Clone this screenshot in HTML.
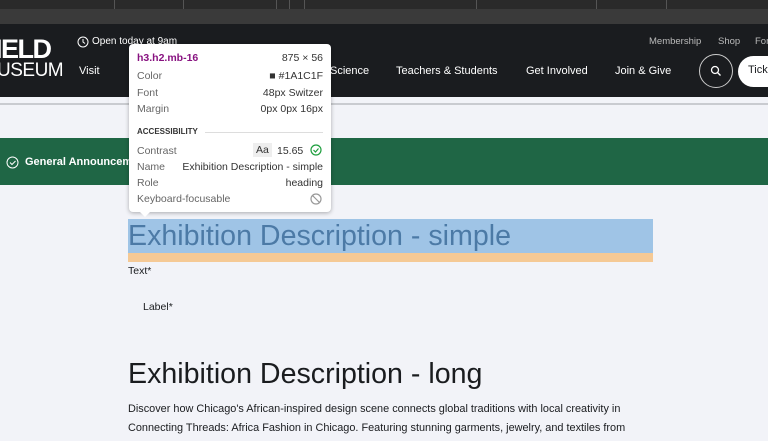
<!DOCTYPE html>
<html><head><style>
*{margin:0;padding:0;box-sizing:border-box}
body{width:768px;height:441px;overflow:hidden;background:#f2f3f8;font-family:"Liberation Sans",sans-serif;position:relative}
.a{position:absolute;white-space:nowrap}
</style></head><body>
<div class="a" style="left:0;top:0;width:768px;height:9px;background:#2a2a2a"></div>
<div class="a" style="left:114px;top:0;width:1px;height:9px;background:#555"></div>
<div class="a" style="left:183px;top:0;width:1px;height:9px;background:#555"></div>
<div class="a" style="left:276px;top:0;width:1px;height:9px;background:#555"></div>
<div class="a" style="left:289px;top:0;width:1px;height:9px;background:#555"></div>
<div class="a" style="left:304px;top:0;width:1px;height:9px;background:#555"></div>
<div class="a" style="left:476px;top:0;width:1px;height:9px;background:#555"></div>
<div class="a" style="left:596px;top:0;width:1px;height:9px;background:#555"></div>
<div class="a" style="left:666px;top:0;width:1px;height:9px;background:#555"></div>
<div class="a" style="left:0;top:9px;width:768px;height:15px;background:#3a3a3a"></div>
<div class="a" style="left:0;top:24px;width:768px;height:73px;background:#1a1c1f"></div>
<div class="a" style="left:-5px;top:34px;color:#fff;font-weight:bold;font-size:27px;letter-spacing:-1.5px">IELD</div>
<div class="a" style="left:-3px;top:60px;color:#fff;font-size:19px;letter-spacing:-0.5px">USEUM</div>
<svg class="a" style="left:77px;top:36px" width="12" height="12"><circle cx="6" cy="6" r="5" fill="none" stroke="#fff" stroke-width="1"/><path d="M6 3v3l2 1.5" fill="none" stroke="#fff"/></svg>
<div class="a" style="left:92px;top:36px;color:#fff;font-size:10px">Open today at 9am</div>
<div class="a" style="left:79px;top:65px;color:#fff;font-size:11px">Visit</div>
<div class="a" style="left:330px;top:65px;color:#fff;font-size:11px">Science</div>
<div class="a" style="left:396px;top:65px;color:#fff;font-size:11px">Teachers &amp; Students</div>
<div class="a" style="left:526px;top:65px;color:#fff;font-size:11px">Get Involved</div>
<div class="a" style="left:615px;top:65px;color:#fff;font-size:11px">Join &amp; Give</div>
<div class="a" style="left:649px;top:36px;color:#bbb;font-size:9.5px">Membership</div>
<div class="a" style="left:718px;top:36px;color:#bbb;font-size:9.5px">Shop</div>
<div class="a" style="left:755px;top:36px;color:#bbb;font-size:9.5px">For</div>
<div class="a" style="left:699px;top:54px;width:34px;height:34px;border:1px solid #ccc;border-radius:50%"></div>
<svg class="a" style="left:710px;top:65px" width="12" height="12"><circle cx="5" cy="5" r="3.5" fill="none" stroke="#fff" stroke-width="1.3"/><path d="M7.5 7.5l3 3" stroke="#fff" stroke-width="1.3"/></svg>
<div class="a" style="left:738px;top:56px;width:60px;height:31px;background:#fff;border-radius:16px;padding:8px 0 0 10px;font-size:11px;color:#1a1c1f">Ticke</div>
<div class="a" style="left:0;top:103px;width:768px;height:2px;background:#c9cbd0"></div>
<div class="a" style="left:0;top:138px;width:768px;height:47px;background:#1f6645"></div>
<svg class="a" style="left:6px;top:156px" width="13" height="13"><circle cx="6.5" cy="6.5" r="5.5" fill="none" stroke="#fff"/><path d="M4 6.5l2 2 3.5-3.5" fill="none" stroke="#fff"/></svg>
<div class="a" style="left:25px;top:156px;color:#fff;font-size:11px;font-weight:bold">General Announceme</div>
<div class="a" style="left:128px;top:219px;width:525px;height:34px;background:#9fc4e6"></div>
<div class="a" style="left:128px;top:253px;width:525px;height:9px;background:#f5c995"></div>
<div class="a" style="left:128px;top:220px;font-size:28.6px;color:#4c7aa6">Exhibition Description - simple</div>
<div class="a" style="left:128px;top:265px;font-size:10.5px;color:#1a1c1f">Text*</div>
<div class="a" style="left:143px;top:301px;font-size:10.5px;color:#1a1c1f">Label*</div>
<div class="a" style="left:128px;top:358px;font-size:28.6px;color:#1a1c1f">Exhibition Description - long</div>
<div class="a" style="left:128px;top:403px;font-size:10.9px;color:#1a1c1f">Discover how Chicago's African-inspired design scene connects global traditions with local creativity in</div>
<div class="a" style="left:128px;top:422px;font-size:10.9px;color:#1a1c1f">Connecting Threads: Africa Fashion in Chicago. Featuring stunning garments, jewelry, and textiles from</div>
<div class="a" style="left:129px;top:44px;width:202px;height:168px;background:#fff;border-radius:4px;box-shadow:0 1px 4px rgba(0,0,0,.3);font-size:10.5px;color:#666">
<div class="a" style="left:8px;top:8px;color:#881280;font-weight:bold">h3.h2.mb-16</div>
<div class="a" style="right:8px;top:8px;color:#333">875 × 56</div>
<div class="a" style="left:8px;top:26px">Color</div><div class="a" style="right:8px;top:26px;color:#333">■ #1A1C1F</div>
<div class="a" style="left:8px;top:43px">Font</div><div class="a" style="right:8px;top:43px;color:#333">48px Switzer</div>
<div class="a" style="left:8px;top:59px">Margin</div><div class="a" style="right:8px;top:59px;color:#333">0px 0px 16px</div>
<div class="a" style="left:8px;top:83px;font-size:8px;font-weight:bold;color:#333">ACCESSIBILITY</div>
<div class="a" style="left:76px;top:88px;width:118px;height:1px;background:#ddd"></div>
<div class="a" style="left:8px;top:101px">Contrast</div>
<div class="a" style="left:124px;top:99px;background:#eee;padding:1px 3px;color:#333">Aa</div>
<div class="a" style="left:148px;top:101px;color:#333">15.65</div>
<svg class="a" style="left:181px;top:100px" width="12" height="12"><circle cx="6" cy="6" r="5" fill="none" stroke="#1e9e3e" stroke-width="1.2"/><path d="M3.5 6l2 2 3-3.5" fill="none" stroke="#1e9e3e" stroke-width="1.2"/></svg>
<div class="a" style="left:8px;top:117px">Name</div><div class="a" style="right:8px;top:117px;color:#333">Exhibition Description - simple</div>
<div class="a" style="left:8px;top:133px">Role</div><div class="a" style="right:8px;top:133px;color:#333">heading</div>
<div class="a" style="left:8px;top:149px">Keyboard-focusable</div>
<svg class="a" style="left:181px;top:149px" width="12" height="12"><circle cx="6" cy="6" r="5" fill="none" stroke="#999" stroke-width="1.2"/><path d="M2.5 2.5l7 7" stroke="#999" stroke-width="1.2"/></svg>
</div>
<div class="a" style="left:139px;top:211px;width:0;height:0;border-left:6px solid transparent;border-right:6px solid transparent;border-top:6px solid #fff"></div>
</body></html>
